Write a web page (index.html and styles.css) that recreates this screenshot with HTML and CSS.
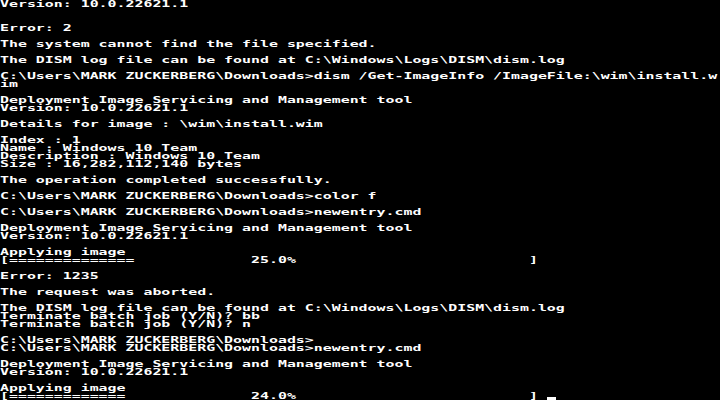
FILE: index.html
```html
<!DOCTYPE html>
<html lang="en">
<head>
    <meta charset="UTF-8">
    <meta name="viewport" content="width=device-width, initial-scale=1.0">
    <title>Command Prompt</title>
    <link rel="stylesheet" href="styles.css">
</head>
<body>

    <!-- 80x50 text mode console, 9x8 cells -->
    <div class="screen">
<pre class="console">Version: 10.0.22621.1


Error: 2

The system cannot find the file specified.

The DISM log file can be found at C:\Windows\Logs\DISM\dism.log

C:\Users\MARK ZUCKERBERG\Downloads&gt;dism /Get-ImageInfo /ImageFile:\wim\install.w
im

Deployment Image Servicing and Management tool
Version: 10.0.22621.1

Details for image : \wim\install.wim

Index : 1
Name : Windows 10 Team
Description : Windows 10 Team
Size : 16,282,112,140 bytes

The operation completed successfully.

C:\Users\MARK ZUCKERBERG\Downloads&gt;color f

C:\Users\MARK ZUCKERBERG\Downloads&gt;newentry.cmd

Deployment Image Servicing and Management tool
Version: 10.0.22621.1

Applying image
[==============             25.0%                          ]

Error: 1235

The request was aborted.

The DISM log file can be found at C:\Windows\Logs\DISM\dism.log
Terminate batch job (Y/N)? bb
Terminate batch job (Y/N)? n

C:\Users\MARK ZUCKERBERG\Downloads&gt;
C:\Users\MARK ZUCKERBERG\Downloads&gt;newentry.cmd

Deployment Image Servicing and Management tool
Version: 10.0.22621.1

Applying image
[=============              24.0%                          ] <span class="cursor"></span></pre>
    </div>

</body>
</html>
```

FILE: styles.css
```css
body {
    margin: 0;
    padding: 0;
    background-color: black;
    color: white;
    overflow: hidden;
}

.screen {
    width: 720px;
    height: 400px;
}

/* glyphs are 9px wide, squashed down to 8px rows */
.console {
    margin: 0;
    height: 625px;
    margin-bottom: -225px;
    font-family: "DejaVu Sans Mono", monospace;
    font-weight: bold;
    font-size: 14.9px;
    line-height: 12.5px;
    white-space: pre;
    transform: scaleY(0.64);
    transform-origin: 0 0;
}

/* underline cursor */
.cursor {
    display: inline-block;
    vertical-align: top;
    width: 9px;
    height: 12.5px;
    background: linear-gradient(transparent 62%, white 62%);
}
```
